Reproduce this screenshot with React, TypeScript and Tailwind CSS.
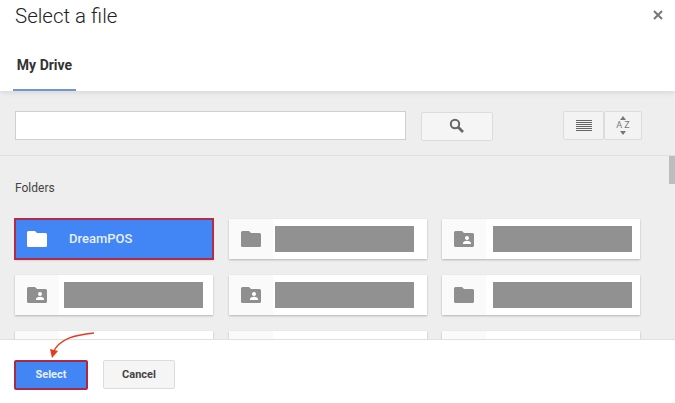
type FolderKind = 'plain' | 'shared';

interface Folder {
    kind: FolderKind;
    name?: string;
    selected?: boolean;
    blockClass?: string;
}

// the names are painted over in the picture, the block sits a bit differently per column
const folders: Folder[] = [
    { kind: 'plain', name: 'DreamPOS', selected: true },
    { kind: 'plain', blockClass: 'ml-[2px]' },
    { kind: 'shared', blockClass: 'ml-[7px]' },
    { kind: 'shared', blockClass: 'ml-[5px]' },
    { kind: 'shared', blockClass: 'ml-[2px]' },
    { kind: 'plain', blockClass: 'ml-[7px]' },
    { kind: 'plain' },
    { kind: 'plain' },
    { kind: 'plain' },
];

function FolderIcon({ kind, color }: { kind: FolderKind; color: string }) {
    return (
        <svg width="20" height="16" viewBox="0 0 20 16" className="block">
            <path
                d="M1.5 0H8l2 2h8.5A1.5 1.5 0 0 1 20 3.5v11a1.5 1.5 0 0 1-1.5 1.5h-17A1.5 1.5 0 0 1 0 14.5v-13A1.5 1.5 0 0 1 1.5 0z"
                fill={color}
            />
            {kind === 'shared' && (
                <>
                    <circle cx="13" cy="7" r="2" fill="#fff" />
                    <path d="M9 13v-1c0-1.4 2.6-2.2 4-2.2s4 .8 4 2.2v1z" fill="#fff" />
                </>
            )}
        </svg>
    );
}

function FolderCard({ folder }: { folder: Folder }) {
    if (folder.selected) {
        return (
            <div className="flex h-[40px] items-center bg-[#4285f4] outline-2 -outline-offset-1 outline-[#b32b45] shadow-[0_1px_2px_rgba(0,0,0,0.25)]">
                <div className="flex w-[44px] justify-center">
                    <FolderIcon kind={folder.kind} color="#ffffff" />
                </div>
                <span className="ml-[10px] text-[13px] font-medium text-[#e8f0fe]">{folder.name}</span>
            </div>
        );
    }
    return (
        <div className="flex h-[40px] bg-white shadow-[0_1px_2px_rgba(0,0,0,0.25)]">
            <div className="flex w-[44px] shrink-0 items-center justify-center bg-[#fafafa]">
                <FolderIcon kind={folder.kind} color="#8f8f8f" />
            </div>
            {folder.blockClass && <div className={`my-[7px] w-[139px] bg-[#919191] ${folder.blockClass}`} />}
        </div>
    );
}

export default function App() {
    return (
        <div className="relative flex h-[403px] w-[675px] flex-col overflow-hidden bg-white font-['Roboto',sans-serif]">
            <div className="z-10 h-[91px] shrink-0 bg-white shadow-[0_1px_6px_rgba(0,0,0,0.12)]">
                <div className="flex items-start justify-between pl-[15px] pr-[12px]">
                    <h1 className="text-[20.5px] leading-[32px] font-light text-[#222]">Select a file</h1>
                    <svg width="10" height="10" viewBox="0 0 10 10" className="mt-[10px]">
                        <path d="M1 1l8 8M9 1L1 9" stroke="#777" strokeWidth="2" />
                    </svg>
                </div>
                <div className="ml-[13px] mt-[17px] flex h-[42px] w-[63px] items-center justify-center border-b-2 border-[#6f97d3] pb-[7px]">
                    <span className="text-[14px] font-bold text-[#333]">My Drive</span>
                </div>
            </div>

            <div className="flex h-[65px] shrink-0 items-start border-b border-[#e0e0e0] bg-[#eeeeee] pl-[15px] pt-[20px]">
                <div className="h-[29px] w-[391px] border border-[#cfcfcf] bg-white" />
                <button className="ml-[15px] mt-[1px] flex h-[29px] w-[72px] items-center justify-center rounded-[2px] border border-[#dcdcdc] bg-[#f5f5f5]">
                    <svg width="16" height="16" viewBox="0 0 16 16" className="-mt-[2px]">
                        <circle cx="6" cy="6" r="4.2" fill="none" stroke="#666" strokeWidth="2" />
                        <path d="M9 9l5 5" stroke="#666" strokeWidth="2.6" />
                    </svg>
                </button>
                <button className="ml-[70px] flex h-[29px] w-[41px] items-center justify-center rounded-[2px] border border-[#dcdcdc] bg-[#f3f3f3]">
                    <svg width="16" height="12" viewBox="0 0 16 12">
                        <path d="M0 .5h16M0 2.5h16M0 4.5h16M0 6.5h16M0 8.5h16M0 10.5h16" stroke="#666" strokeWidth="1" />
                    </svg>
                </button>
                <button className="flex h-[29px] w-[38px] flex-col items-center justify-center rounded-[2px] border border-[#dcdcdc] bg-[#f3f3f3]">
                    <svg width="6" height="4" viewBox="0 0 6 4"><path d="M3 0l3 4H0z" fill="#777" /></svg>
                    <span className="pl-[2px] text-[9px] leading-[11px] tracking-[2px] text-[#777]">AZ</span>
                    <svg width="6" height="4" viewBox="0 0 6 4"><path d="M0 0h6L3 4z" fill="#777" /></svg>
                </button>
            </div>

            <div className="relative min-h-0 flex-1 overflow-hidden bg-[#eeeeee] pl-[15px] pt-[24px]">
                <div className="absolute right-0 top-0 h-[28px] w-[6px] bg-[#bdbdbd]" />
                <p className="text-[12px] leading-[16px] text-[#444]">Folders</p>
                <div className="mt-[23px] grid w-[625px] grid-cols-3 gap-x-[15.5px] gap-y-[16px]">
                    {folders.map((folder, i) => (
                        <FolderCard key={i} folder={folder} />
                    ))}
                </div>
            </div>

            <div className="z-10 flex h-[64px] shrink-0 items-start border-t border-[#e0e0e0] bg-white pl-[15px] pt-[21px]">
                <button className="h-[28px] w-[72px] rounded-[1px] bg-[#4285f4] text-[11px] font-bold text-[#e8f0fe] outline-2 -outline-offset-1 outline-[#a82a45]">
                    Select
                </button>
                <button className="ml-[16px] -mt-[1px] h-[29px] w-[72px] rounded-[2px] border border-[#dcdcdc] bg-[#f5f5f5] pt-[1px] text-[11px] font-bold text-[#444]">
                    Cancel
                </button>
            </div>

            <svg width="50" height="30" viewBox="0 0 50 30" className="absolute left-[48px] top-[330px] z-20">
                <path d="M46 3C28 5 11 8 5 23" fill="none" stroke="#e8391d" strokeWidth="1.4" />
                <path d="M2 19l8 2-6 7z" fill="#e8391d" />
            </svg>
        </div>
    );
}
